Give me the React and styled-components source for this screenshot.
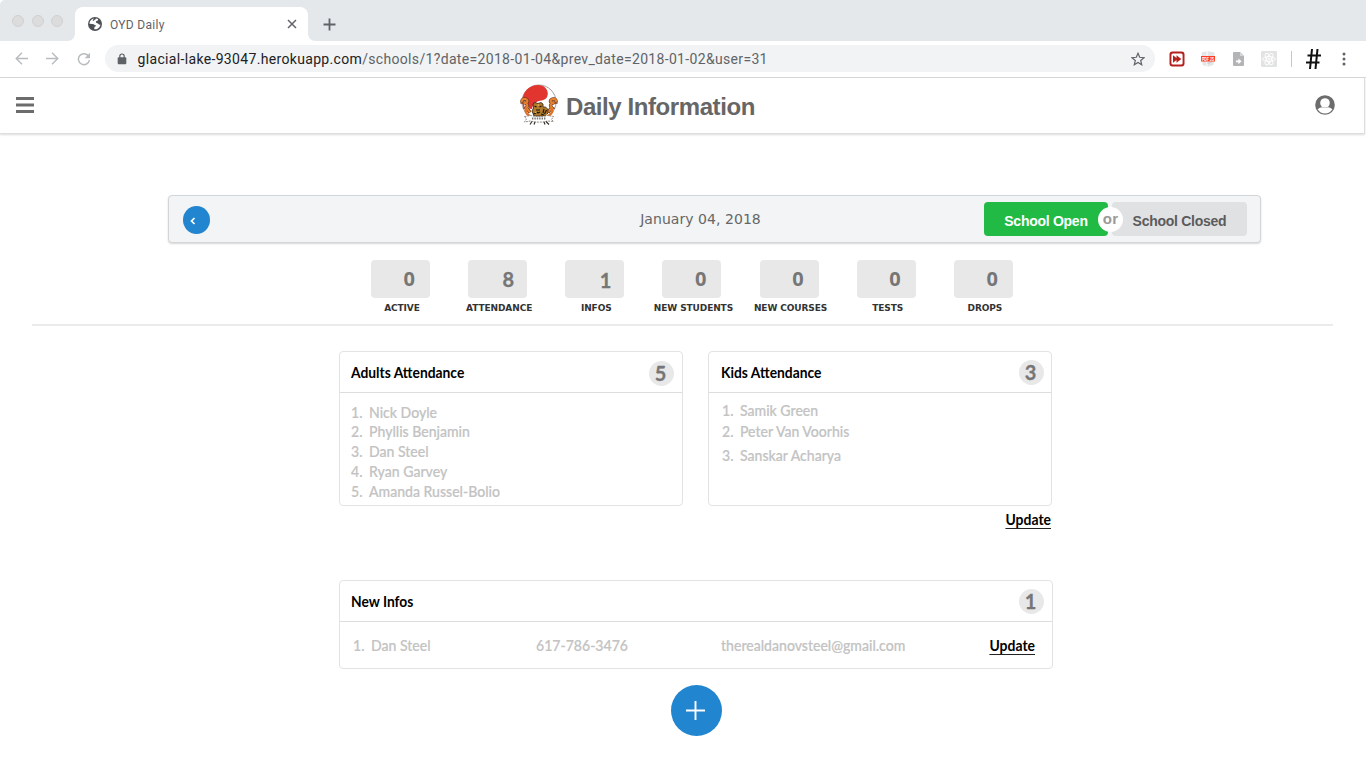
import React from 'react';
import styled, { createGlobalStyle } from 'styled-components';

const GlobalStyle = createGlobalStyle`
  *, *::before, *::after { box-sizing: border-box; }
  body { margin: 0; background: #fff; overflow: hidden; font-family: Lato, sans-serif; }
  svg { display: block; flex: none; }
  ol { list-style: none; margin: 0; padding: 0; }
  button { border: 0; margin: 0; padding: 0; font: inherit; }
  h1, h2 { margin: 0; }
`;

const Page = styled.div`
  width: 1366px;
  height: 768px;
  display: flex;
  flex-direction: column;
  overflow: hidden;
`;

/* Browser window */
const TabStrip = styled.div`
  height: 41px;
  flex: none;
  display: flex;
  align-items: flex-end;
  background: #e4e8eb;
  border-top-left-radius: 5px;
`;
const Lights = styled.div`
  display: flex;
  gap: 7.5px;
  width: 67px;
  padding: 0 0 14px 12px;
`;
const Light = styled.span`
  width: 12px;
  height: 12px;
  border-radius: 50%;
  background: #dcdcdc;
  border: 1px solid #d0d1d2;
`;
const TabFoot = styled.svg`
  width: 8px;
  height: 8px;
  fill: #fff;
`;
const Tab = styled.div`
  width: 233px;
  height: 34px;
  padding: 0 10px 0 13px;
  display: flex;
  align-items: center;
  background: #fff;
  border-radius: 8px 8px 0 0;
`;
const TabTitle = styled.span`
  flex: 1;
  padding: 1px 0 0 8px;
  font: 400 12px/16px Roboto, sans-serif;
  letter-spacing: 0.3px;
  color: #5f6368;
`;
const NewTab = styled.div`
  padding: 0 0 10px 7px;
`;
const Toolbar = styled.div`
  height: 37px;
  flex: none;
  display: flex;
  align-items: center;
  padding: 0 0 1px 15px;
  border-bottom: 1px solid #d6d7d9;
`;
const NavButtons = styled.div`
  width: 90px;
  flex: none;
  display: flex;
  align-items: center;
  gap: 18px;
`;
const AddressBar = styled.div`
  width: 1050px;
  height: 27px;
  flex: none;
  padding: 0 10px 0 12px;
  display: flex;
  align-items: center;
  background: #f1f3f4;
  border-radius: 14px;
`;
const Url = styled.span`
  flex: 1;
  padding-left: 10.6px;
  font: 400 14px/20px Roboto, sans-serif;
  letter-spacing: 0.33px;
  white-space: nowrap;
  color: #5f6368;
  b { font-weight: 400; color: #202124; }
`;
const Extensions = styled.div`
  flex: 1;
  display: flex;
  align-items: center;
  padding-left: 13px;
`;
const ExtensionSlot = styled.span`
  width: ${(p) => p.$w}px;
  flex: none;
  display: flex;
  justify-content: center;
`;

/* Application header */
const Header = styled.header`
  width: 1365px;
  height: 56px;
  flex: none;
  display: flex;
  align-items: center;
  padding: 0 29px 2px 16px;
  border-right: 1px solid #dedede;
  border-bottom: 1px solid #dedede;
  box-shadow: 0 1px 2px rgba(0, 0, 0, 0.14);
`;
const Brand = styled.div`
  display: flex;
  align-items: center;
  gap: 8px;
  margin: 0 auto 0 486px;
`;
const Title = styled.h1`
  font: 700 24px/30px "Liberation Sans", sans-serif;
  letter-spacing: -0.42px;
  padding-top: 4px;
  color: #666;
`;

/* Date bar */
const DateBar = styled.section`
  width: 1093px;
  height: 48px;
  flex: none;
  margin: 61px 0 0 168px;
  padding: 0 13px 0 14px;
  display: flex;
  align-items: center;
  justify-content: space-between;
  background: #f2f4f5;
  border: 1px solid #d3d6d8;
  border-radius: 4px;
  box-shadow: 0 1px 2px rgba(0, 0, 0, 0.16);
`;
const PrevButton = styled.button`
  width: 27px;
  height: 28px;
  margin-top: 1px;
  padding: 2px 0 0 7px;
  display: flex;
  align-items: center;
  border-radius: 50%;
  background: #2185d0;
`;
const DateText = styled.span`
  font: 400 14px/20px "DejaVu Sans", sans-serif;
  letter-spacing: 0.05px;
  padding-left: 207px;
  color: #666;
`;
const Toggle = styled.div`
  display: flex;
  align-items: center;
  padding-bottom: 1px;
`;
const Choice = styled.button`
  height: 34px;
  width: ${(p) => (p.$open ? 124 : 135)}px;
  padding: 4px 0 0;
  border-radius: 4px;
  font: 700 14px/20px "Liberation Sans", sans-serif;
  letter-spacing: -0.27px;
  color: ${(p) => (p.$open ? '#fff' : '#5a5b5c')};
  background: ${(p) => (p.$open ? '#21ba45' : '#e0e1e2')};
`;
const Or = styled.span`
  z-index: 1;
  width: 25px;
  height: 25px;
  margin: 1px -11px 0 -10px;
  border-radius: 50%;
  background: #fff;
  font: 700 15px/24px "Liberation Sans", sans-serif;
  letter-spacing: 0.3px;
  text-align: center;
  color: #999;
`;

/* Statistics */
const Stats = styled.section`
  height: 83px;
  flex: none;
  margin: 0 33px 0 32px;
  padding: 17px 0 0 339px;
  display: flex;
  gap: 38.15px;
  border-bottom: 2px solid #ebebeb;
`;
const Stat = styled.div`
  width: 59px;
  display: flex;
  flex-direction: column;
  align-items: center;
`;
const StatValue = styled.div`
  width: 59px;
  height: 38px;
  flex: none;
  padding: ${(p) => (p.$lato ? (p.$low ? '7px 13px 0 0' : '6px 13px 0 0') : '5px 15px 0 0')};
  border-radius: 4px;
  background: #e8e8e8;
  font: 700 20px/27px ${(p) => (p.$lato ? 'Lato' : '"Open Sans"')}, sans-serif;
  text-align: right;
  color: #767676;
  -webkit-text-stroke: ${(p) => (p.$lato ? '0.3px #767676' : '0')};
`;
const StatLabel = styled.div`
  padding: 4px 0 0 3px;
  font: 700 9px/12px "DejaVu Sans", sans-serif;
  letter-spacing: -0.1px;
  white-space: nowrap;
  color: #333;
`;

/* Cards */
const Content = styled.main`
  width: 714px;
  margin: 25px 0 0 339px;
  display: flex;
  flex-direction: column;
`;
const CardRow = styled.div`
  display: flex;
  gap: 25px;
`;
const Card = styled.section`
  width: ${(p) => p.$w}px;
  height: ${(p) => p.$h}px;
  border: 1px solid #e2e3e3;
  border-radius: 4px;
`;
const InfoCard = styled(Card)`
  margin-top: 51px;
`;
const CardHead = styled.div`
  height: 41px;
  padding: 0 ${(p) => p.$right || 8}px 0 ${(p) => p.$left || 11}px;
  display: flex;
  align-items: center;
  justify-content: space-between;
  border-bottom: 1px solid #dcdddd;
`;
const CardTitle = styled.h2`
  font: 700 15px/20px Lato, sans-serif;
  transform: scaleX(0.922);
  transform-origin: left;
  color: #000;
`;
const Count = styled.span`
  width: 25px;
  height: 25px;
  margin-top: ${(p) => p.$drop}px;
  padding-right: 2px;
  border-radius: 50%;
  background: #e8e8e8;
  font: 700 20px/24px Lato, sans-serif;
  text-align: center;
  color: #767676;
  -webkit-text-stroke: 0.3px #767676;
`;
const Names = styled.ol`
  padding: ${(p) => p.$top}px 0 0 ${(p) => p.$left}px;
`;
const Name = styled.li`
  display: flex;
  height: ${(p) => p.$h || 20}px;
  font: 500 15px/20px Lato, sans-serif;
  transform: scaleX(0.937);
  transform-origin: left;
  white-space: nowrap;
  color: #c3c3c3;
  -webkit-text-stroke: 0.2px #c3c3c3;
`;
const Cell = styled(Name).attrs({ as: 'span' })`
  margin-top: -1px;
`;
const Num = styled.span`
  width: 19.2px;
`;
const Update = styled.a`
  align-self: ${(p) => p.$align || 'flex-end'};
  margin: ${(p) => p.$margin};
  font: 700 15px/17px Lato, sans-serif;
  transform: scaleX(0.93);
  transform-origin: right;
  color: #000;
  border-bottom: 1px solid #222;
`;
const InfoRow = styled.div`
  height: 46px;
  padding: 0 17px 0 13px;
  display: grid;
  grid-template-columns: 183px 185px 1fr auto;
  align-items: center;
`;
const AddButton = styled.button`
  width: 51px;
  height: 51px;
  margin: 16px 0 0 332px;
  padding: 0 0 0 15px;
  display: flex;
  align-items: center;
  border-radius: 50%;
  background: #2185d0;
`;

const Globe = () => (
  <svg width="14" height="14" viewBox="0 0 14 14">
    <circle cx="7" cy="7" r="7" fill="#4d5156" />
    <path d="M6.2 1.5C3.6 1.8 1.5 4 1.4 6.8l3.2.2c1.4 0 1.7 1.2 2.7 1.3 1 0 .8 1.2 0 1.3-1 .2-1 1.1-1 2.6 3.2.5 5.8-1.8 6.2-4.7-.9.4-1.5.2-2-.6-.6-.8-1.8-.6-2.4-1.5-.7-1 .2-1.6 1.2-1.7.8-.1.5-1 .9-1.6-.8-.4-1.5-.5-2.3-.6-.2.9-.6 1.3-1.4 1.4-.6.1-.6.9-1.3 1-.8.1-.4-1.4 1-2.4z" fill="#fff" />
  </svg>
);

const Stroke = ({ w, h, d, color = '#5f6368', sw = 1.6 }) => (
  <svg width={w} height={h} viewBox={`0 0 ${w} ${h}`} fill="none" stroke={color} strokeWidth={sw}>
    <path d={d} />
  </svg>
);

const Reload = () => (
  <svg width="14" height="14" viewBox="0 0 14 14">
    <path d="M11.6 4.2A5.5 5.5 0 1 0 12.4 8" fill="none" stroke="#b9bcbe" strokeWidth="1.5" />
    <path d="M13 .8v5.4H7.7z" fill="#b9bcbe" />
  </svg>
);

const Lock = () => (
  <svg width="10" height="12" viewBox="0 0 10 12">
    <path d="M2.8 5V3.2a2.2 2.2 0 0 1 4.4 0V5" fill="none" stroke="#5f6368" strokeWidth="1.2" />
    <rect x=".7" y="4.2" width="8.6" height="7" rx="1" fill="#5f6368" />
  </svg>
);

const Star = () => (
  <svg width="14" height="14" viewBox="0 0 14 14">
    <path d="M7 1.3l1.7 4 4.3.4-3.3 2.8 1 4.2L7 10.5l-3.7 2.2 1-4.2L1 5.7l4.3-.4z" fill="none" stroke="#5f6368" strokeWidth="1.2" />
  </svg>
);

const FastForward = () => (
  <svg width="16" height="16" viewBox="0 0 16 16">
    <rect x=".5" y=".5" width="15" height="15" rx="3" fill="#b3201d" />
    <rect x="2.4" y="2.4" width="11.2" height="11.2" rx="1.5" fill="#fff" />
    <path d="M4 4.2L7.5 7V4.2L12.3 8 7.5 11.8V9L4 11.8z" fill="#b3201d" />
  </svg>
);

const PdfLabel = styled.text`
  font: 700 5px "Liberation Sans", sans-serif;
  fill: #fff;
`;
const PdfIcon = () => (
  <svg width="16" height="16" viewBox="-1 0 16 16">
    <path d="M.5 1.5l5-1.3v15l-4-1.2zM6.5 0l7 1.5-1 12.5-6 1.8z" fill="#e3e5e6" />
    <path d="M6 11.5l6-1-5 3z" fill="#cfd2d3" />
    <rect y="5" width="14" height="5.5" fill="#ff3c22" />
    <PdfLabel x="1" y="9.5" textLength="12" lengthAdjust="spacingAndGlyphs">PDF JS</PdfLabel>
  </svg>
);

const FileIcon = () => (
  <svg width="11" height="14" viewBox="0 0 11 14">
    <path d="M1 0h6l4 4v9a1 1 0 0 1-1 1H1a1 1 0 0 1-1-1V1a1 1 0 0 1 1-1z" fill="#b3b4b5" />
    <path d="M7 0v4h4z" fill="#d5d6d7" />
    <path d="M3 8.4h2.4V6.4L8.6 9.3l-3.2 2.9v-2H3z" fill="#fff" />
  </svg>
);

const AtomIcon = () => (
  <svg width="16" height="16" viewBox="0 0 16 16">
    <rect width="16" height="16" rx="1" fill="#e2e3e3" />
    <g fill="none" stroke="#fff" strokeWidth=".9">
      <ellipse cx="8" cy="8" rx="6.3" ry="2.5" />
      <ellipse cx="8" cy="8" rx="6.3" ry="2.5" transform="rotate(60 8 8)" />
      <ellipse cx="8" cy="8" rx="6.3" ry="2.5" transform="rotate(120 8 8)" />
      <circle cx="8" cy="8" r="1" />
    </g>
  </svg>
);

const MoreDots = () => (
  <svg width="4" height="14" viewBox="0 0 4 14" fill="#5f6368">
    <circle cx="2" cy="2" r="1.5" /><circle cx="2" cy="7" r="1.5" /><circle cx="2" cy="12" r="1.5" />
  </svg>
);

const UserIcon = () => (
  <svg width="20" height="20" viewBox="0 0 20 20">
    <circle cx="10" cy="10" r="9.8" fill="#6c6c6c" />
    <circle cx="10" cy="8" r="4.8" fill="#fff" />
    <path d="M2.6 14.3c1.5-1.3 3-2 4.5-2.1 1.8 1 4 1 5.8 0 1.5.1 3 .8 4.5 2.1A8.6 8.6 0 0 1 2.6 14.3z" fill="#fff" />
  </svg>
);

const Crest = () => (
  <svg width="38" height="42" viewBox="0 0 38 42">
    <circle cx="19" cy="18" r="17" fill="#fff" stroke="#7a7474" strokeWidth=".7" />
    <path d="M3.5 24C-.5 11 7 1.2 18 1c8-.1 11.500 7 9 12-2 4.500-8 2.500-12 6-2 2-2.500 3-3 6z" fill="#e2352f" />
    <path d="M9 24L7 16l-4 1 3 11 6 3zM29 24l2-8 4 1-3 11-6 3z" fill="#fff" />
    <path d="M2 18c-.5-3 2.500-4 5-2 1.500 2-.5 2.500-2 3 3 1 3 3.500 1 5 2 1 3 3 4 4.500M36 18c.5-3-2.500-4-5-2-1.500 2 .5 2.500 2 3-3 1-3 3.500-1 5-2 1-3 3-4 4.500" fill="none" stroke="#65331b" strokeWidth="3.400" />
    <path d="M2 18c-.5-3 2.500-4 5-2 1.500 2-.5 2.500-2 3 3 1 3 3.500 1 5 2 1 3 3 4 4.500M36 18c.5-3-2.500-4-5-2-1.500 2 .5 2.500 2 3-3 1-3 3.500-1 5-2 1-3 3-4 4.500" fill="none" stroke="#e8812f" strokeWidth="2.200" />
    <path d="M6 24c-1 3 0 6 4 8M32 24c1 3 0 6-4 8" fill="none" stroke="#df7429" strokeWidth="2.200" />
    <path d="M13 20l2-1.500 3 1 3-1 2 1.500v3c4-.5 5 2 5 6l-3 3H14l-2-5 1.500-3z" fill="#b07b2b" stroke="#2b2014" strokeWidth=".8" />
    <path d="M14.500 22l2 1M21.500 22l-2 1M16 26h4M17 28l1 1 2-1M24 25l-1 4M26.500 26l-2 4M13.500 30l3-1M21 30l3 1" fill="none" stroke="#20180f" strokeWidth="1.200" />
    <path d="M17.500 21h1.500M15 28l1.500 1M26 31h2" stroke="#f4ca56" />
    <path d="M4.500 32.500l6-1c6 1.500 12 1.500 17 0l6 1-2 3 2 2-6-.5c-5 1.500-11 1.500-17 0l-6 1 2-3z" fill="#fff" stroke="#77706c" strokeWidth=".8" strokeDasharray="2 .8" />
    <path d="M12 34.500h14" stroke="#777" strokeWidth="2" strokeDasharray="1.400 1" />
    <path d="M12 37.500l-2 3M15 38l-1 2.500M24 38l1 2.500M26 37.500l3 3" stroke="#322e2b" strokeWidth="1.200" />
  </svg>
);

const STATS = [
  { label: 'ACTIVE', value: '0' },
  { label: 'ATTENDANCE', value: '8', lato: true },
  { label: 'INFOS', value: '1', lato: true, low: true },
  { label: 'NEW STUDENTS', value: '0' },
  { label: 'NEW COURSES', value: '0' },
  { label: 'TESTS', value: '0' },
  { label: 'DROPS', value: '0' },
];
const ADULTS = [
  { name: 'Nick Doyle', h: 19 },
  { name: 'Phyllis Benjamin', h: 20 },
  { name: 'Dan Steel', h: 20 },
  { name: 'Ryan Garvey', h: 20 },
  { name: 'Amanda Russel-Bolio', h: 20 },
];
const KIDS = [
  { name: 'Samik Green', h: 21 },
  { name: 'Peter Van Voorhis', h: 24 },
  { name: 'Sanskar Acharya', h: 20 },
];

const NameList = ({ people, top, left }) => (
  <Names $top={top} $left={left}>
    {people.map((p, i) => (
      <Name key={p.name} $h={p.h}><Num>{i + 1}.</Num>{p.name}</Name>
    ))}
  </Names>
);

export default function App() {
  return (
    <Page>
      <GlobalStyle />
      <TabStrip>
        <Lights><Light /><Light /><Light /></Lights>
        <TabFoot viewBox="0 0 8 8"><path d="M8 0v8H0c5 0 8-3 8-8z" /></TabFoot>
        <Tab>
          <Globe />
          <TabTitle>OYD Daily</TabTitle>
          <Stroke w={12} h={12} d="M2 2l8 8M10 2l-8 8" sw={1.5} />
        </Tab>
        <TabFoot viewBox="0 0 8 8"><path d="M0 0v8h8C3 8 0 5 0 0z" /></TabFoot>
        <NewTab><Stroke w={13} h={13} d="M6.5 .5v12M.5 6.5h12" sw={1.8} /></NewTab>
      </TabStrip>
      <Toolbar>
        <NavButtons>
          <Stroke w={13} h={13} d="M13 6.5H1.5M7 .7L1.2 6.5 7 12.3" color="#b9bcbe" sw={1.4} />
          <Stroke w={13} h={13} d="M0 6.5h11.5M6 .7l5.8 5.8L6 12.3" color="#b9bcbe" sw={1.4} />
          <Reload />
        </NavButtons>
        <AddressBar>
          <Lock />
          <Url><b>glacial-lake-93047.herokuapp.com</b>/schools/1?date=2018-01-04&amp;prev_date=2018-01-02&amp;user=31</Url>
          <Star />
        </AddressBar>
        <Extensions>
          <ExtensionSlot $w={18}><FastForward /></ExtensionSlot>
          <ExtensionSlot $w={44}><PdfIcon /></ExtensionSlot>
          <ExtensionSlot $w={17}><FileIcon /></ExtensionSlot>
          <ExtensionSlot $w={44}><AtomIcon /></ExtensionSlot>
          <Stroke w={1} h={16} d="M.5 0v16" color="#c4c6c8" sw={1} />
          <ExtensionSlot $w={42}>
            <Stroke w={15} h={20} d="M6 0L4 20M11.5 0L9.5 20M1.500 6.500H15M0 13.500H13.500" color="#111" sw={2} />
          </ExtensionSlot>
          <ExtensionSlot $w={20}><MoreDots /></ExtensionSlot>
        </Extensions>
      </Toolbar>

      <Header>
        <Stroke w={18} h={18} d="M0 2.5h18M0 9h18M0 15.5h18" color="#6c6c6c" sw={2.8} />
        <Brand>
          <Crest />
          <Title>Daily Information</Title>
        </Brand>
        <UserIcon />
      </Header>

      <DateBar>
        <PrevButton aria-label="Previous day">
          <Stroke w={6} h={8} d="M4.5 1L1.5 4l3 3" color="#fff" sw={1.7} />
        </PrevButton>
        <DateText>January 04, 2018</DateText>
        <Toggle>
          <Choice $open>School Open</Choice>
          <Or>or</Or>
          <Choice>School Closed</Choice>
        </Toggle>
      </DateBar>

      <Stats>
        {STATS.map((s) => (
          <Stat key={s.label}>
            <StatValue $lato={s.lato} $low={s.low}>{s.value}</StatValue>
            <StatLabel>{s.label}</StatLabel>
          </Stat>
        ))}
      </Stats>

      <Content>
        <CardRow>
          <Card $w={344} $h={155}>
            <CardHead>
              <CardTitle>Adults Attendance</CardTitle>
              <Count $drop={2}>5</Count>
            </CardHead>
            <NameList people={ADULTS} top={9} left={11} />
          </Card>
          <Card $w={344} $h={155}>
            <CardHead $left={12} $right={7}>
              <CardTitle>Kids Attendance</CardTitle>
              <Count $drop={1}>3</Count>
            </CardHead>
            <NameList people={KIDS} top={7} left={13} />
          </Card>
        </CardRow>
        <Update $margin="5px 2px 0 0">Update</Update>

        <InfoCard $w={714} $h={89}>
          <CardHead>
            <CardTitle>New Infos</CardTitle>
            <Count $drop={0}>1</Count>
          </CardHead>
          <InfoRow>
            <Cell><Num>1.</Num>Dan Steel</Cell>
            <Cell>617-786-3476</Cell>
            <Cell>therealdanovsteel@gmail.com</Cell>
            <Update $align="center" $margin="2px 0 0">Update</Update>
          </InfoRow>
        </InfoCard>
        <AddButton aria-label="Add info">
          <Stroke w={19} h={19} d="M9.5 0v19M0 9.5h19" color="#fff" sw={1.9} />
        </AddButton>
      </Content>
    </Page>
  );
}
